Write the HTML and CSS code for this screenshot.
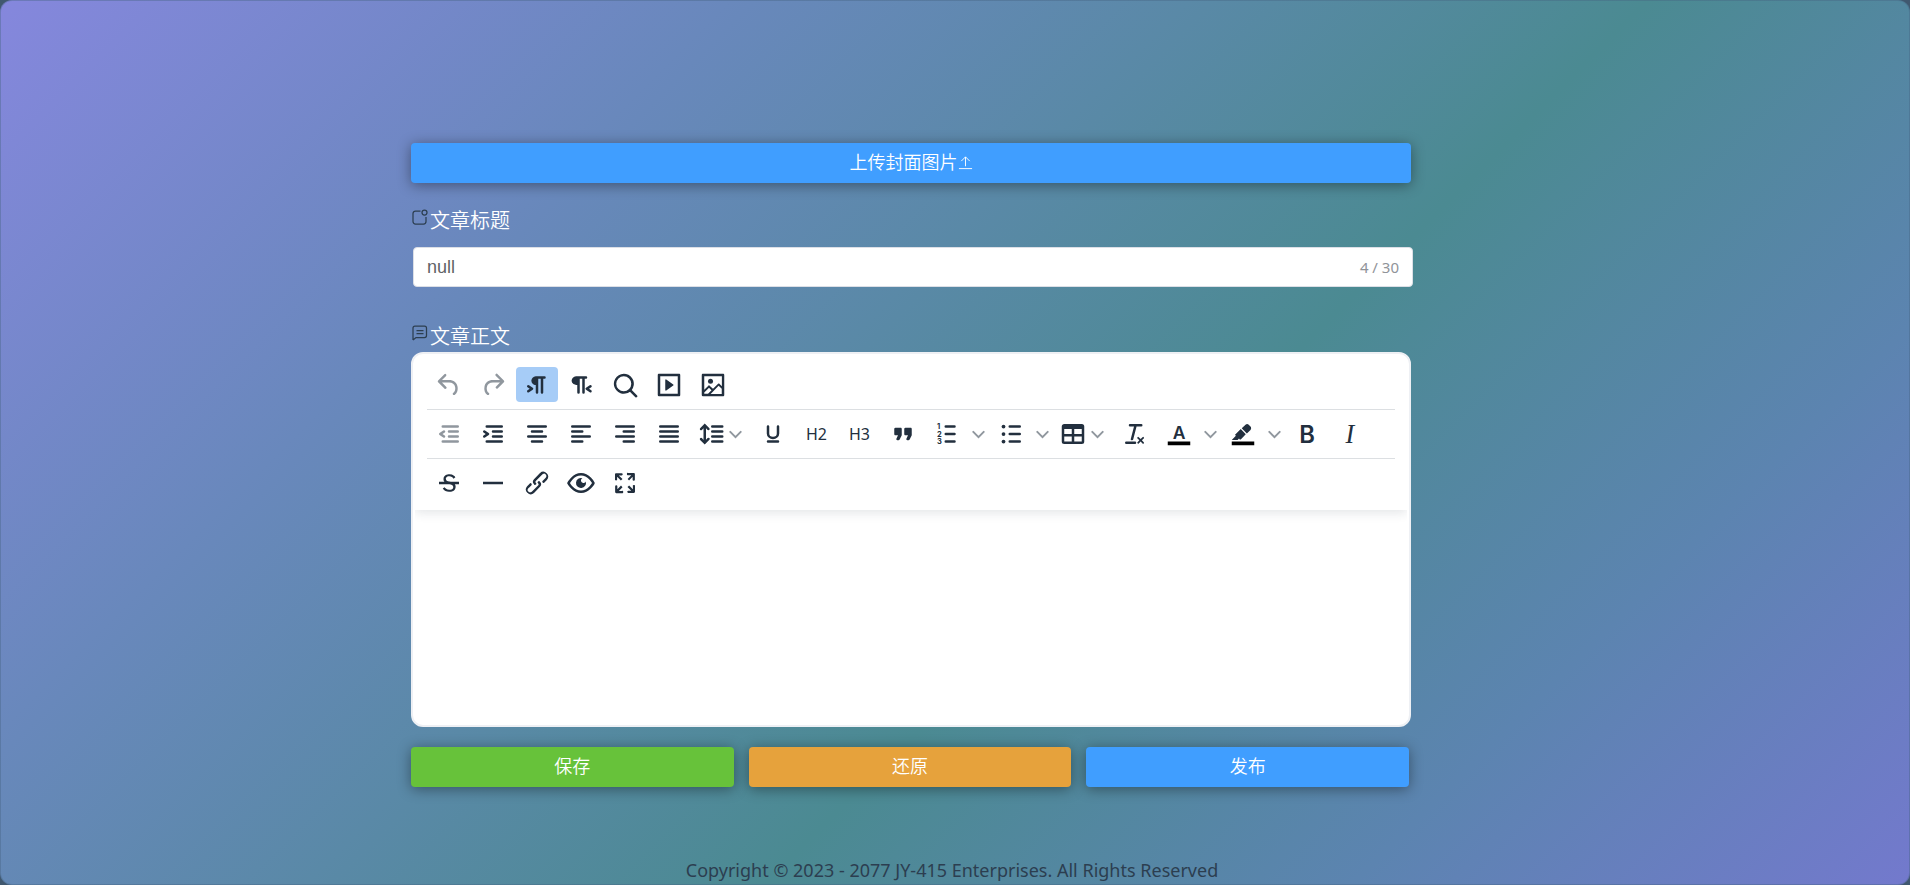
FILE: index.html
```html
<!DOCTYPE html>
<html lang="zh-CN">
<head>
<meta charset="utf-8">
<meta name="viewport" content="width=device-width, initial-scale=1">
<title>文章编辑</title>
<link rel="stylesheet" href="styles.css">
</head>
<body>
<div class="page">
  <main class="form">
    <button type="button" class="btn btn-blue">上传封面图片<svg class="upload-icon" viewBox="0 0 16 16" aria-hidden="true"><path d="M1 14.5h14M8 12V2M3.500 6.500L8 2l4.500 4.500"/></svg></button>

    <div class="label-row">
      <svg class="label-icon" viewBox="0 0 16 16" aria-hidden="true"><path d="M8.500 2H3.500A2.500 2.500 0 0 0 1 4.500v8A2.500 2.500 0 0 0 3.500 15h8a2.500 2.500 0 0 0 2.500-2.500V8"/><circle cx="12.500" cy="3.500" r="2.500"/></svg>
      <label for="title">文章标题</label>
    </div>
    <div class="title-box">
      <input id="title" type="text" value="null" maxlength="30">
      <span class="counter">4 / 30</span>
    </div>

    <div class="label-row label-body">
      <svg class="label-icon" viewBox="0 0 16 16" aria-hidden="true"><path d="M1 15V3a2 2 0 0 1 2-2h9.500a2 2 0 0 1 2 2v7.500a2 2 0 0 1-2 2H4L1 15M4.500 5.500h7M4.500 8.500h7"/></svg>
      <label for="content">文章正文</label>
    </div>
    <section class="editor">
      <div class="toolbar">
        <div class="tools">
          <button type="button" class="tool" aria-label="撤销" disabled><svg viewBox="0 0 24 24"><path d="M6.400 8H12c3.700 0 6.200 2 6.800 5.100.6 2.700-.4 5.600-2.300 6.800a1 1 0 0 1-1-1.800c1.100-.6 1.800-2.700 1.400-4.600-.5-2.100-2.100-3.500-4.900-3.500H6.400l3.300 3.300a1 1 0 1 1-1.400 1.400l-5-5a1 1 0 0 1 0-1.400l5-5a1 1 0 0 1 1.400 1.400L6.400 8Z"/></svg></button>
          <button type="button" class="tool" aria-label="重做" disabled><svg viewBox="0 0 24 24"><path d="M17.600 10H12c-2.800 0-4.400 1.400-4.900 3.500-.4 2 .3 4 1.400 4.600a1 1 0 1 1-1 1.800c-2-1.200-2.900-4.100-2.300-6.800.6-3 3-5.100 6.800-5.100h5.600l-3.300-3.300a1 1 0 1 1 1.400-1.400l5 5a1 1 0 0 1 0 1.400l-5 5a1 1 0 0 1-1.400-1.400l3.300-3.300Z"/></svg></button>
          <button type="button" class="tool active" aria-label="从左到右"><svg viewBox="0 0 24 24"><path d="M11 5h7a1 1 0 0 1 0 2h-1v11a1 1 0 0 1-2 0V7h-2v11a1 1 0 0 1-2 0v-6c-.5 0-1 0-1.400-.3A3.400 3.400 0 0 1 7.800 10a3.300 3.300 0 0 1 0-2.800 3.400 3.400 0 0 1 1.800-1.800L11 5ZM4.400 16.200 6.200 15l-1.800-1.200a1 1 0 0 1 1.200-1.600l3 2a1 1 0 0 1 0 1.600l-3 2a1 1 0 1 1-1.200-1.600Z"/></svg></button>
          <button type="button" class="tool" aria-label="从右到左"><svg viewBox="0 0 24 24"><path d="M8 5h8a1 1 0 0 1 0 2h-1v11a1 1 0 0 1-2 0V7h-2v11a1 1 0 0 1-2 0v-6c-.5 0-1 0-1.400-.3A3.400 3.400 0 0 1 4.800 10a3.300 3.300 0 0 1 0-2.800 3.400 3.400 0 0 1 1.800-1.800L8 5Zm12.200 11.200a1 1 0 1 1-1.200 1.600l-3-2a1 1 0 0 1 0-1.600l3-2a1 1 0 1 1 1.200 1.600L18.400 15l1.800 1.200Z"/></svg></button>
          <button type="button" class="tool" aria-label="查找"><svg viewBox="0 0 24 24"><path d="M16 17.300a8 8 0 1 1 1.400-1.400l4.300 4.400a1 1 0 0 1-1.400 1.400l-4.400-4.300Zm-5-.3a6 6 0 1 0 0-12 6 6 0 0 0 0 12Z"/></svg></button>
          <button type="button" class="tool" aria-label="媒体"><svg viewBox="0 0 24 24"><path fill-rule="evenodd" d="M4 3h16c.6 0 1 .4 1 1v16c0 .6-.4 1-1 1H4a1 1 0 0 1-1-1V4c0-.6.4-1 1-1Zm1 2v14h14V5H5Zm4.800 2.600 5.600 4a.5.5 0 0 1 0 .8l-5.600 4A.5.5 0 0 1 9 16V8a.5.5 0 0 1 .8-.4Z"/></svg></button>
          <button type="button" class="tool" aria-label="图片"><svg viewBox="0 0 24 24"><path fill-rule="evenodd" d="m5 15.700 3.300-3.200c.3-.3.700-.3 1 0L12 15l4.100-4c.3-.4.800-.4 1 0l2 1.900V5H5v10.700ZM5 18v1h3l2.800-2.900-2-2L5 17.900V18Zm14-3-2.500-2.400-6.400 6.500H19v-4ZM4 3h16c.6 0 1 .4 1 1v16c0 .6-.4 1-1 1H4a1 1 0 0 1-1-1V4c0-.6.4-1 1-1Z"/><circle cx="10" cy="9" r="2"/></svg></button>
        </div>
        <div class="tools">
          <button type="button" class="tool" aria-label="减少缩进" disabled><svg viewBox="0 0 24 24"><path class="line" d="M7 6h12M12 10h7M12 14h7M7 18h12"/><path d="M8.600 13.200a1 1 0 0 1-1.200 1.600l-3-2a1 1 0 0 1 0-1.600l3-2a1 1 0 0 1 1.200 1.600L6.800 12l1.800 1.200Z"/></svg></button>
          <button type="button" class="tool" aria-label="增加缩进"><svg viewBox="0 0 24 24"><path class="line" d="M7 6h12M12 10h7M12 14h7M7 18h12"/><path d="M4.400 13.200 6.200 12l-1.800-1.200a1 1 0 0 1 1.200-1.600l3 2a1 1 0 0 1 0 1.600l-3 2a1 1 0 1 1-1.200-1.600Z"/></svg></button>
          <button type="button" class="tool" aria-label="居中"><svg viewBox="0 0 24 24"><path class="line" d="M5 6h14M8 10h8M5 14h14M8 18h8"/></svg></button>
          <button type="button" class="tool" aria-label="左对齐"><svg viewBox="0 0 24 24"><path class="line" d="M5 6h14M5 10h8M5 14h14M5 18h8"/></svg></button>
          <button type="button" class="tool" aria-label="右对齐"><svg viewBox="0 0 24 24"><path class="line" d="M5 6h14M11 10h8M5 14h14M11 18h8"/></svg></button>
          <button type="button" class="tool" aria-label="两端对齐"><svg viewBox="0 0 24 24"><path class="line" d="M5 6h14M5 10h14M5 14h14M5 18h14"/></svg></button>
          <button type="button" class="tool menu" aria-label="行高"><svg viewBox="0 0 24 24"><path class="line" d="M13 6h8M13 10h8M13 14h8M13 18h8"/><path d="M7 3.600l3.700 3.700a1 1 0 0 1-1.300 1.500h-.1L8 7.300v9.200l1.300-1.300a1 1 0 0 1 1.300 0h.1c.4.4.4 1 0 1.300v.1L7 20.400l-3.700-3.700a1 1 0 0 1 1.300-1.500h.1L6 16.700V7.400L4.700 8.700a1 1 0 0 1-1.300 0h-.1a1 1 0 0 1 0-1.300v-.1L7 3.600z"/></svg><svg class="chevron" viewBox="0 0 10 10"><path d="M1 3l4 4 4-4"/></svg></button>
          <button type="button" class="tool" aria-label="下划线"><svg viewBox="0 0 24 24"><path class="line" d="M8 6v5.500a4 3.600 0 0 0 8 0V6M8 18h8"/></svg></button>
          <button type="button" class="tool heading">H2</button>
          <button type="button" class="tool heading">H3</button>
          <button type="button" class="tool" aria-label="引用"><svg viewBox="0 0 24 24"><path d="M7.500 17h.9c.4 0 .7-.2.900-.6L11 13V8c0-.6-.4-1-1-1H6a1 1 0 0 0-1 1v4c0 .6.4 1 1 1h2l-1.300 2.700a1 1 0 0 0 .8 1.300Zm8 0h.9c.4 0 .7-.2.900-.6L19 13V8c0-.6-.4-1-1-1h-4a1 1 0 0 0-1 1v4c0 .6.4 1 1 1h2l-1.300 2.700a1 1 0 0 0 .8 1.300Z"/></svg></button>
          <button type="button" class="tool" aria-label="编号列表"><svg viewBox="0 0 24 24"><path class="line" d="M11 6h7M11 12h7M11 18h7"/><text class="digit" x="4" y="8">1</text><text class="digit" x="4" y="14">2</text><text class="digit" x="4" y="20">3</text></svg></button>
          <button type="button" class="arrow" aria-label="编号列表样式"><svg class="chevron" viewBox="0 0 10 10"><path d="M1 3l4 4 4-4"/></svg></button>
          <button type="button" class="tool" aria-label="项目列表"><svg viewBox="0 0 24 24"><path class="line" d="M11 6h8M11 12h8M11 18h8"/><circle cx="6" cy="6" r="1.500"/><circle cx="6" cy="12" r="1.500"/><circle cx="6" cy="18" r="1.500"/></svg></button>
          <button type="button" class="arrow" aria-label="项目列表样式"><svg class="chevron" viewBox="0 0 10 10"><path d="M1 3l4 4 4-4"/></svg></button>
          <button type="button" class="tool menu" aria-label="表格"><svg viewBox="0 0 24 24"><path fill-rule="evenodd" d="M19 4a2 2 0 0 1 2 2v12a2 2 0 0 1-2 2H5a2 2 0 0 1-2-2V6c0-1.100.9-2 2-2h14ZM5 14v4h6v-4H5Zm14 0h-6v4h6v-4Zm0-6h-6v4h6V8ZM5 12h6V8H5v4Z"/></svg><svg class="chevron" viewBox="0 0 10 10"><path d="M1 3l4 4 4-4"/></svg></button>
          <button type="button" class="tool" aria-label="清除格式"><svg viewBox="0 0 24 24"><path d="M13.200 6a1 1 0 0 1 0 .2l-2.600 10a1 1 0 0 1-1 .8h-.2a.8.8 0 0 1-.8-1l2.600-10H8a1 1 0 1 1 0-2h9a1 1 0 0 1 0 2h-3.800ZM5 18h7a1 1 0 0 1 0 2H5a1 1 0 0 1 0-2Zm13 1.500L16.500 18 15 19.500a.7.7 0 0 1-1-1l1.500-1.500-1.500-1.500a.7.7 0 0 1 1-1l1.500 1.500 1.500-1.500a.7.7 0 0 1 1 1L17.500 17l1.500 1.500a.7.7 0 0 1-1 1Z"/></svg></button>
          <button type="button" class="tool" aria-label="文字颜色"><svg viewBox="0 0 24 24"><path class="swatch" d="M3 18h18v3H3z"/><text class="glyph-a" x="12" y="16">A</text></svg></button>
          <button type="button" class="arrow" aria-label="选择文字颜色"><svg class="chevron" viewBox="0 0 10 10"><path d="M1 3l4 4 4-4"/></svg></button>
          <button type="button" class="tool" aria-label="背景颜色"><svg viewBox="0 0 24 24"><path class="swatch" d="M3 18h18v3H3z"/><path d="M7.700 16.700H3l3.300-3.300-.7-.8L10.200 8l4 4.100-4 4.200c-.2.2-.6.2-.8 0l-.6-.7-1.100 1.100zm5-7.500L11 7.400l3-2.900a2 2 0 0 1 2.600 0L18 6c.7.7.7 2 0 2.700l-2.900 2.900-1.800-1.800-.5-.6"/></svg></button>
          <button type="button" class="arrow" aria-label="选择背景颜色"><svg class="chevron" viewBox="0 0 10 10"><path d="M1 3l4 4 4-4"/></svg></button>
          <button type="button" class="tool" aria-label="粗体"><svg viewBox="0 0 24 24"><text class="glyph-b" x="12" y="19">B</text></svg></button>
          <button type="button" class="tool" aria-label="斜体"><svg viewBox="0 0 24 24"><text class="glyph-i" x="11" y="19">I</text></svg></button>
        </div>
        <div class="tools">
          <button type="button" class="tool" aria-label="删除线"><svg viewBox="0 0 24 24"><path class="line butt" d="M4 12h16"/><path d="M15.600 8.500c-.5-.7-1-1.100-1.300-1.300-.6-.4-1.300-.6-2-.6-2.700 0-2.800 1.700-2.800 2.100 0 1.600 1.800 2 3.200 2.300 4.400.9 4.600 2.800 4.600 3.900 0 1.400-.7 4.100-5 4.100A6.200 6.200 0 0 1 7 16.400l1.500-1.100c.4.6 1.600 2 3.700 2 1.600 0 2.500-.4 3-1.200.4-.8.3-2-.8-2.600-.7-.4-1.600-.7-2.900-1-1-.2-3.900-.8-3.900-3.600C7.600 6 10.300 5 12.400 5c2.900 0 4.200 1.600 4.700 2.400l-1.500 1.100Z"/></svg></button>
          <button type="button" class="tool" aria-label="水平线"><svg viewBox="0 0 24 24"><path class="line butt" d="M4 12h16"/></svg></button>
          <button type="button" class="tool" aria-label="链接"><svg viewBox="0 0 24 24"><path d="M6.200 12.300a1 1 0 0 1 1.400 1.400l-2 2a2 2 0 1 0 2.600 2.800l4.800-4.800a1 1 0 0 0 0-1.400 1 1 0 1 1 1.400-1.300 2.900 2.900 0 0 1 0 4L9.600 20a3.900 3.900 0 0 1-5.500-5.500l2-2Zm11.600-.6a1 1 0 0 1-1.400-1.400l2-2a2 2 0 1 0-2.600-2.800L11 10.300a1 1 0 0 0 0 1.400A1 1 0 1 1 9.600 13a2.900 2.900 0 0 1 0-4L14.400 4a3.900 3.900 0 0 1 5.500 5.500l-2 2Z"/></svg></button>
          <button type="button" class="tool" aria-label="预览"><svg viewBox="0 0 24 24"><path fill-rule="evenodd" d="M3.500 12.500c.5.8 1.100 1.600 1.800 2.300 2 2 4.200 3.200 6.700 3.200s4.700-1.200 6.700-3.200a16.200 16.200 0 0 0 2.100-2.800 15.700 15.700 0 0 0-2.100-2.800c-2-2-4.200-3.200-6.700-3.200a9.300 9.300 0 0 0-6.700 3.200A16.200 16.200 0 0 0 3.200 12c0 .2.2.3.3.5Zm-2.400-1 .7-1.200L4 7.800C6.200 5.400 8.900 4 12 4c3 0 5.800 1.400 8.100 3.800a18.200 18.200 0 0 1 2.800 3.700v1l-.7 1.200a18.100 18.100 0 0 1-2.100 2.500c-2.300 2.400-5 3.800-8.100 3.800-3 0-5.800-1.400-8.100-3.800a18.200 18.200 0 0 1-2.800-3.700 1 1 0 0 1 0-1Zm12-3.300a2 2 0 1 0 2.700 2.600 4 4 0 1 1-2.600-2.600Z"/></svg></button>
          <button type="button" class="tool" aria-label="全屏"><svg viewBox="0 0 24 24"><path d="m15.300 10-1.200-1.300 2.900-3h-2.300a.9.9 0 1 1 0-1.700H19c.5 0 .9.4.900.9v4.400a.9.9 0 1 1-1.800 0V7l-2.900 3Zm0 4 3 3v-2.300a.9.9 0 1 1 1.700 0V19c0 .5-.4.9-.9.900h-4.400a.9.9 0 1 1 0-1.800H17l-3-2.900 1.300-1.200ZM10 15.400l-2.900 3h2.300a.9.9 0 1 1 0 1.700H5a.9.9 0 0 1-.9-.9v-4.400a.9.9 0 1 1 1.800 0V17l2.900-3 1.200 1.300ZM8.700 10 5.700 7v2.300a.9.9 0 0 1-1.700 0V5c0-.5.4-.9.900-.9h4.400a.9.9 0 0 1 0 1.800H7l3 2.900-1.300 1.200Z"/></svg></button>
        </div>
      </div>
      <textarea id="content" class="content"></textarea>
    </section>

    <div class="actions">
      <button type="button" class="btn btn-green">保存</button>
      <button type="button" class="btn btn-orange">还原</button>
      <button type="button" class="btn btn-blue">发布</button>
    </div>
  </main>
  <footer class="footer">Copyright © 2023 - 2077 JY-415 Enterprises. All Rights Reserved</footer>
</div>
</body>
</html>
```
FILE: styles.css
```css
* {
  box-sizing: border-box;
}

body {
  margin: 0;
  background: #40586f;
  color: #2c3e50;
  font-family: "Noto Sans", "Noto Sans CJK SC", sans-serif;
  overflow: hidden;
}

button,
input,
textarea {
  font: inherit;
  margin: 0;
  border: 0;
}

.page {
  min-height: 100vh;
  padding-top: 142px;
  display: flex;
  flex-direction: column;
  border: 1px solid rgba(70, 100, 130, 0.4);
  border-radius: 12px;
  background: linear-gradient(135deg, #8587dd 0%, #6888bb 27%, #4b8a92 59%, #5c84b0 80%, #7379cd 100%);
  background-origin: border-box;
}

.form {
  width: calc(100% - 88px);
  max-width: 1088px;
  margin: 0 auto;
  padding-right: 88px;
}

.btn {
  width: 100%;
  height: 40px;
  padding: 0 0 2px;
  display: flex;
  align-items: center;
  justify-content: center;
  border-radius: 4px;
  color: #fff;
  font-size: 18px;
  font-weight: 350;
  line-height: 24px;
  box-shadow: 0 2px 14px rgba(0, 0, 0, 0.4);
}

.btn-blue {
  background: #409eff;
}

.btn-green {
  background: #67c23a;
}

.btn-orange {
  background: #e6a23c;
}

.upload-icon {
  width: 15px;
  height: 15px;
  fill: none;
  stroke: #fff;
  stroke-width: 1;
}

.label-row {
  display: flex;
  gap: 2px;
  margin-top: 23px;
  padding-left: 1px;
  color: #fff;
  font-size: 20px;
  font-weight: 350;
  line-height: 30px;
}

.label-body {
  margin-top: 35px;
}

.label-icon {
  width: 16px;
  height: 16px;
  margin-top: 3px;
  fill: none;
  stroke: #2c3e50;
  stroke-width: 1.250;
}

.title-box {
  display: flex;
  align-items: center;
  width: 100%;
  height: 40px;
  margin: 11px 0 0 2px;
  padding: 0 13px;
  border: 1px solid #dcdfe6;
  border-radius: 4px;
  background: #fff;
}

.title-box input {
  flex: 1;
  min-width: 0;
  padding: 0;
  outline: 0;
  background: none;
  color: #606266;
  font-family: "Liberation Sans", "Noto Sans CJK SC", sans-serif;
  font-size: 18px;
}

.counter {
  color: #909399;
  font-size: 15px;
}

.editor {
  height: 375px;
  display: flex;
  flex-direction: column;
  border: 2px solid #eef0f4;
  border-radius: 12px;
  background: #fff;
  overflow: hidden;
}

.toolbar {
  margin: 0 2px;
  padding: 6px 12px 3px;
  box-shadow: 0 3px 10px rgba(34, 47, 62, 0.12);
  clip-path: inset(0 0 -20px);
}

.tools {
  display: flex;
  align-items: center;
  min-height: 49px;
}

.tools + .tools {
  border-top: 1px solid #dcdfe2;
}

.tool {
  width: 42px;
  height: 35px;
  margin: 0 1px;
  padding: 0;
  flex: none;
  display: flex;
  align-items: center;
  justify-content: center;
  border-radius: 4px;
  background: none;
  color: #222f3e;
}

.tool svg {
  width: 30px;
  height: 30px;
  flex: none;
  fill: currentColor;
}

.tool:disabled {
  color: #90979e;
}

.tool.active {
  background: #a6ccf7;
}

.tool.heading {
  width: 41px;
  font-size: 16px;
}

.tool.menu {
  width: 58px;
  padding-left: 4px;
  justify-content: flex-start;
  gap: 3px;
}

.arrow {
  width: 20px;
  height: 35px;
  padding: 0 2px 0 0;
  flex: none;
  display: flex;
  align-items: center;
  justify-content: center;
  background: none;
}

.tool .chevron,
.chevron {
  width: 13px;
  height: 13px;
  fill: none;
  stroke: #90979e;
  stroke-width: 1.500;
  stroke-linecap: round;
}

.line {
  fill: none;
  stroke: currentColor;
  stroke-width: 2;
  stroke-linecap: round;
}

.butt {
  stroke-linecap: butt;
}

.swatch {
  fill: #000;
}

.digit {
  font: 700 6px Inter, sans-serif;
}

.glyph-a,
.glyph-b,
.glyph-i {
  text-anchor: middle;
}

.glyph-a {
  font: 600 14px Inter, sans-serif;
}

.glyph-b {
  font: 600 19px Inter, sans-serif;
}

.glyph-i {
  font: italic 400 21px "Liberation Serif", serif;
}

.content {
  flex: 1;
  width: 100%;
  padding: 16px;
  outline: 0;
  resize: none;
  background: none;
}

.actions {
  display: flex;
  gap: 15px;
  margin-top: 20px;
  padding-right: 2px;
}

.footer {
  margin-top: 70px;
  padding-right: 6px;
  text-align: center;
  font-size: 18px;
  line-height: 27px;
}
```
